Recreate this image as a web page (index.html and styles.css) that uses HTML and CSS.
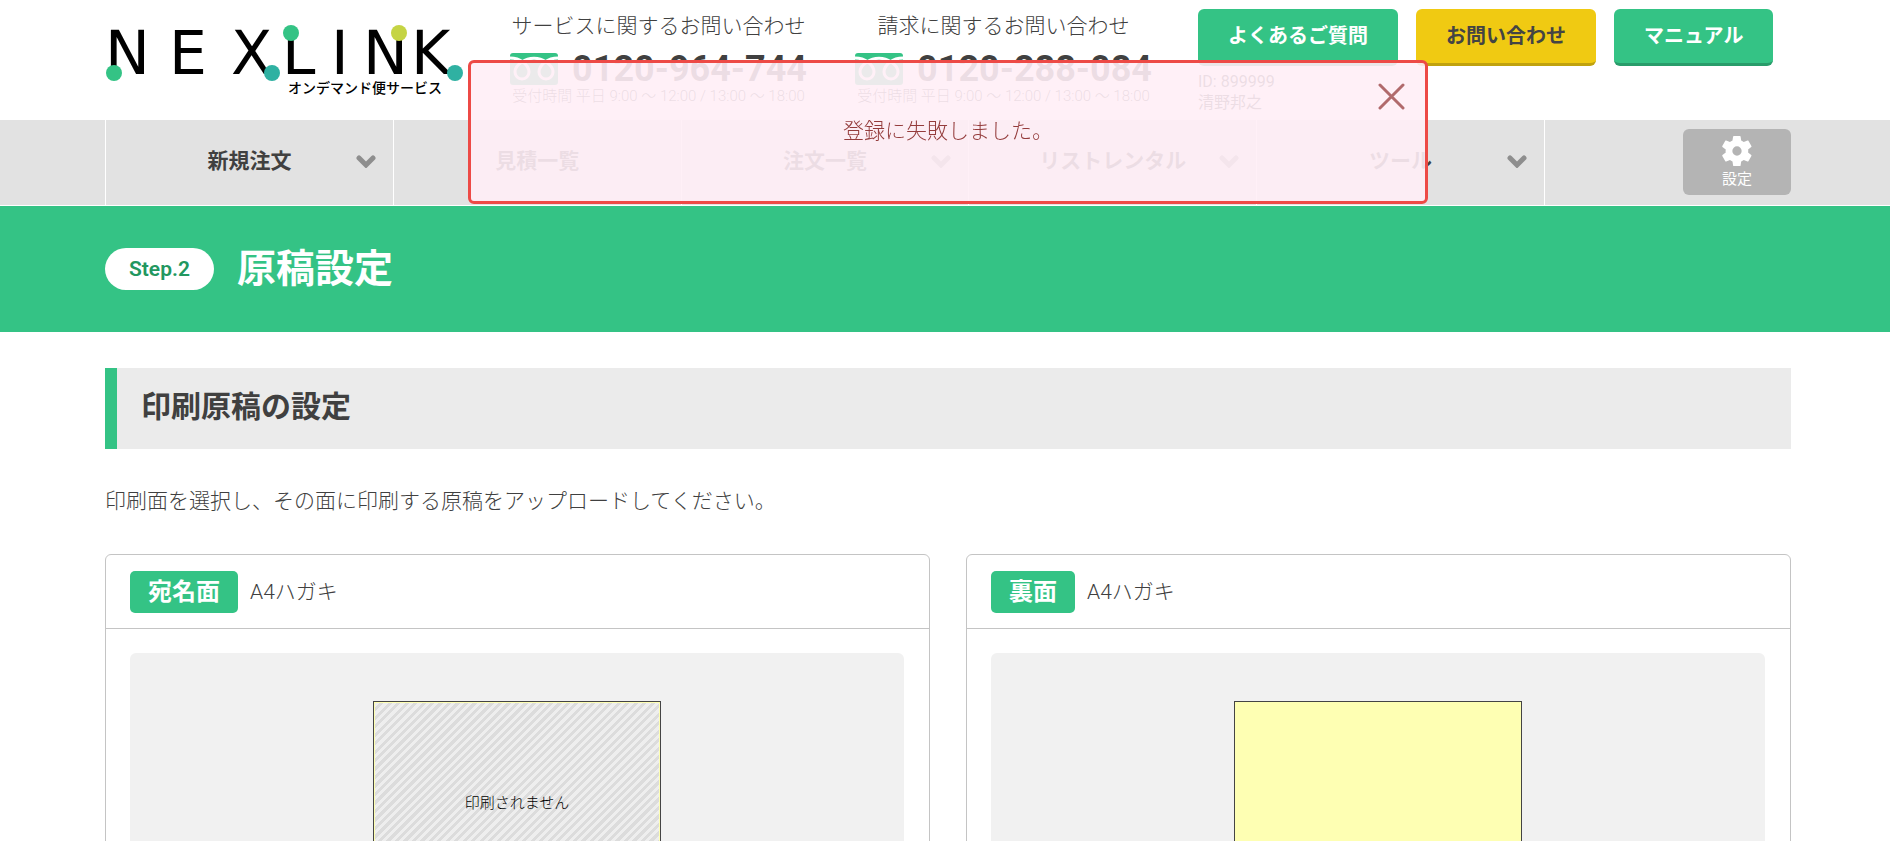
FILE: index.html
```html
<!DOCTYPE html>
<html lang="ja">
<head>
    <meta charset="UTF-8">
    <meta name="viewport" content="width=device-width, initial-scale=1.0">
    <title>原稿設定 | NEXLINK オンデマンド便サービス</title>
    <link rel="stylesheet" href="styles.css">
</head>
<body>
    <!-- 共通アイコン -->
    <svg class="defs" aria-hidden="true">
        <symbol id="icon-dial" viewBox="0 0 48 32">
            <path fill="currentColor" d="M3 0h42a3 3 0 0 1 3 3v26a3 3 0 0 1-3 3H3a3 3 0 0 1-3-3V3a3 3 0 0 1 3-3z"/>
            <path fill="none" stroke="#fff" stroke-width="3" d="M0 5c5 0 9 1 13 4 4 3 6 6 6 10a7 7 0 0 1-14 0c0-4 2-7 7-10 7-5 17-5 24 0 5 3 7 6 7 10a7 7 0 0 1-14 0c0-4 2-7 6-10 4-3 8-4 13-4"/>
        </symbol>
        <symbol id="icon-down" viewBox="0 0 20 13">
            <path fill="none" stroke="currentColor" stroke-width="5" stroke-linecap="round" d="M3 3l7 7 7-7"/>
        </symbol>
    </svg>

    <header class="header inner">
        <a href="#" class="logo">
            <svg width="360" height="80" viewBox="0 0 360 80" role="img" aria-label="NEXLINK オンデマンド便サービス">
                <text class="logo-name" x="0 64 126 177 226 258 306" y="56">NEXLINK</text>
                <circle cx="9" cy="55" r="8" fill="#34c385"/>
                <circle cx="167" cy="55" r="8" fill="#2fb1a2"/>
                <circle cx="186" cy="15" r="8" fill="#34c385"/>
                <circle cx="294" cy="15" r="8" fill="#c5d444"/>
                <circle cx="350" cy="55" r="8" fill="#2fb1a2"/>
                <text class="logo-sub" x="183" y="75">オンデマンド便サービス</text>
            </svg>
        </a>
        <div class="tel">
            <p class="tel-title">サービスに関するお問い合わせ</p>
            <p class="tel-number"><svg width="48" height="32"><use href="#icon-dial"/></svg>0120-964-744</p>
            <p class="tel-time">受付時間 平日 9:00 〜 12:00 / 13:00 〜 18:00</p>
        </div>
        <div class="tel">
            <p class="tel-title">請求に関するお問い合わせ</p>
            <p class="tel-number"><svg width="48" height="32"><use href="#icon-dial"/></svg>0120-288-084</p>
            <p class="tel-time">受付時間 平日 9:00 〜 12:00 / 13:00 〜 18:00</p>
        </div>
        <div class="support">
            <div class="buttons">
                <a href="#" class="btn">よくあるご質問</a>
                <a href="#" class="btn btn-yellow">お問い合わせ</a>
                <a href="#" class="btn">マニュアル</a>
            </div>
            <p class="user">ID: 899999<br>清野邦之</p>
        </div>
    </header>

    <nav class="nav">
        <div class="nav-inner inner">
            <ul class="menu">
                <li><a href="#">新規注文<svg class="arrow" width="20" height="13"><use href="#icon-down"/></svg></a></li>
                <li><a href="#">見積一覧</a></li>
                <li><a href="#">注文一覧<svg class="arrow" width="20" height="13"><use href="#icon-down"/></svg></a></li>
                <li><a href="#">リストレンタル<svg class="arrow" width="20" height="13"><use href="#icon-down"/></svg></a></li>
                <li><a href="#">ツール<svg class="arrow" width="20" height="13"><use href="#icon-down"/></svg></a></li>
            </ul>
            <button type="button" class="setting">
                <svg width="30" height="30" viewBox="2 2 20 20"><path fill="currentColor" d="M19.4 13c0-.3.1-.6.1-1s0-.7-.1-1l2.1-1.7c.2-.1.3-.4.1-.6l-2-3.5c-.1-.2-.4-.3-.6-.2l-2.5 1c-.5-.4-1.1-.7-1.7-1l-.4-2.6c0-.2-.2-.4-.5-.4h-4c-.2 0-.4.2-.5.4L9 5c-.6.3-1.2.6-1.7 1l-2.5-1c-.2-.1-.5 0-.6.2l-2 3.5c-.1.2-.1.5.1.6L4.5 11c0 .3-.1.7-.1 1s0 .7.1 1l-2.2 1.7c-.2.1-.2.4-.1.6l2 3.5c.1.2.4.3.6.2l2.5-1c.5.4 1.1.7 1.7 1l.4 2.6c0 .2.2.4.5.4h4c.3 0 .5-.2.5-.4l.4-2.6c.6-.3 1.2-.6 1.7-1l2.5 1c.2.1.5 0 .6-.2l2-3.5c.1-.2.1-.5-.1-.6L19.4 13zM12 15.1a3.1 3.1 0 1 1 0-6.2 3.1 3.1 0 0 1 0 6.2z"/></svg>
                設定
            </button>
        </div>
    </nav>

    <div class="page-title">
        <div class="page-title-inner inner">
            <span class="step">Step.2</span>
            <h1>原稿設定</h1>
        </div>
    </div>

    <main class="inner">
        <h2>印刷原稿の設定</h2>
        <p class="lead">印刷面を選択し、その面に印刷する原稿をアップロードしてください。</p>
        <div class="cards">
            <section class="card">
                <div class="card-head"><h3>宛名面</h3>A4ハガキ</div>
                <div class="card-body">
                    <div class="preview no-print"><span>印刷されません</span></div>
                </div>
            </section>
            <section class="card">
                <div class="card-head"><h3>裏面</h3>A4ハガキ</div>
                <div class="card-body">
                    <div class="preview"></div>
                </div>
            </section>
        </div>
    </main>

    <!-- エラーメッセージ -->
    <div class="alert-area inner">
        <div class="alert" role="alert">
            <p>登録に失敗しました。</p>
            <button type="button" class="close" aria-label="閉じる">
                <svg width="27" height="27" viewBox="0 0 27 27"><path fill="none" stroke="currentColor" stroke-width="3" stroke-linecap="round" d="M2 2l23 23M25 2L2 25"/></svg>
            </button>
        </div>
    </div>
</body>
</html>
```
FILE: styles.css
```css
* {
    box-sizing: border-box;
}

body {
    margin: 0;
    font-family: Roboto, "Noto Sans CJK JP", sans-serif;
    font-size: 21px;
    font-weight: 300;
    line-height: 30px;
    color: #404040;
    background: #fff;
}

h1, h2, h3, p, ul {
    margin: 0;
    padding: 0;
}

a {
    color: inherit;
    text-decoration: none;
}

button {
    padding: 0;
    border: none;
    font-family: inherit;
    cursor: pointer;
}

svg {
    display: block;
    flex-shrink: 0;
}

.defs {
    display: none;
}

.inner {
    padding-left: 105px;
    padding-right: 99px;
}

/* ヘッダー */
.header {
    display: flex;
    align-items: flex-start;
    min-height: 120px;
}

.logo {
    margin: 18px 45px 0 0;
}

.logo-name {
    font-family: "DejaVu Sans", sans-serif;
    font-size: 60px;
    font-weight: 400;
    fill: #000;
}

.logo-sub {
    font-size: 14px;
    font-weight: 500;
    fill: #000;
}

.tel {
    width: 297px;
    padding-top: 11px;
    text-align: center;
    white-space: nowrap;
}

.tel + .tel {
    margin-left: 48px;
}

.tel-number {
    display: flex;
    justify-content: space-between;
    margin-top: 12px;
    font-size: 36px;
    font-weight: 700;
    line-height: 32px;
}

.tel-number svg {
    color: #34c385;
}

.tel-time {
    font-size: 15px;
    line-height: 22px;
}

.support {
    margin-left: 46px;
    padding-top: 9px;
}

.buttons {
    display: flex;
    gap: 18px;
}

.btn {
    padding: 14px 30px 13px;
    border-bottom: 3px solid #299c6a;
    border-radius: 6px;
    background: #34c385;
    color: #fff;
    font-size: 20px;
    font-weight: 700;
    line-height: 27px;
    white-space: nowrap;
}

.btn-yellow {
    border-bottom-color: #c0a20e;
    background: #f0ca12;
    color: #444;
}

.user {
    margin-top: 5px;
    font-size: 16px;
    font-weight: 400;
    line-height: 21px;
}

/* ナビ */
.nav {
    border-bottom: 1px solid #fff;
    background: #e2e2e2;
}

.nav-inner {
    display: flex;
    justify-content: space-between;
    align-items: flex-start;
}

.menu {
    display: flex;
    width: 1440px;
    border-left: 1px solid #fff;
    list-style: none;
}

.menu li {
    flex: 1;
    border-right: 1px solid #fff;
}

.menu a {
    position: relative;
    display: block;
    padding-bottom: 2px;
    font-weight: 700;
    line-height: 83px;
    text-align: center;
}

.arrow {
    position: absolute;
    top: 35px;
    right: 17px;
    color: #8e8e8e;
}

.setting {
    display: flex;
    flex-direction: column;
    align-items: center;
    width: 108px;
    height: 66px;
    margin-top: 9px;
    padding-top: 7px;
    border-radius: 6px;
    background: #b4b4b4;
    color: #fff;
    font-size: 15px;
    line-height: 26px;
}

/* ページタイトル */
.page-title {
    background: #34c385;
}

.page-title-inner {
    display: flex;
    align-items: center;
    gap: 23px;
    padding-top: 33px;
    padding-bottom: 33px;
}

.step {
    padding: 0 24px;
    border-radius: 21px;
    background: #fff;
    color: #22975f;
    font-weight: 600;
    line-height: 42px;
}

h1 {
    color: #fff;
    font-size: 39px;
    font-weight: 700;
    line-height: 60px;
}

/* コンテンツ */
h2 {
    margin-top: 36px;
    padding: 18px 24px 21px;
    border-left: 12px solid #34c385;
    background: #ebebeb;
    font-size: 30px;
    font-weight: 700;
    line-height: 42px;
}

.lead {
    margin: 37px 0 38px;
}

.cards {
    display: flex;
    gap: 36px;
    padding-bottom: 60px;
}

.card {
    flex: 1;
    border: 1px solid #c4c4c4;
    border-radius: 6px;
}

.card-head {
    display: flex;
    align-items: center;
    gap: 12px;
    padding: 16px 24px 15px;
    border-bottom: 1px solid #c4c4c4;
}

.card-head h3 {
    padding: 0 18px;
    border-radius: 5px;
    background: #34c385;
    color: #fff;
    font-size: 24px;
    font-weight: 700;
    line-height: 42px;
}

.card-body {
    margin: 24px 25px 24px 24px;
    padding: 48px 0;
    border-radius: 6px;
    background: #f1f1f1;
}

.preview {
    width: 288px;
    height: 204px;
    margin: 0 auto;
    padding: 1px;
    border: 1px solid #444;
    background: #feffb3;
}

.no-print span {
    display: flex;
    justify-content: center;
    align-items: center;
    height: 100%;
    background: repeating-linear-gradient(-45deg, #dcdcdc 0 3px, #eee 3px 6px);
    color: #000;
    font-size: 15px;
}

/* エラーメッセージ */
.alert-area {
    position: fixed;
    top: 60px;
    left: 0;
    display: flex;
    justify-content: center;
    width: 100%;
    pointer-events: none;
}

.alert {
    position: relative;
    width: 960px;
    padding: 53px 24px 55px;
    border: 3px solid #ed4a46;
    border-radius: 6px;
    background: rgba(255, 238, 246, 0.9);
    color: #943c3c;
    text-align: center;
    pointer-events: auto;
}

.close {
    position: absolute;
    top: 20px;
    right: 20px;
    background: none;
    color: #b16a6c;
}
```
